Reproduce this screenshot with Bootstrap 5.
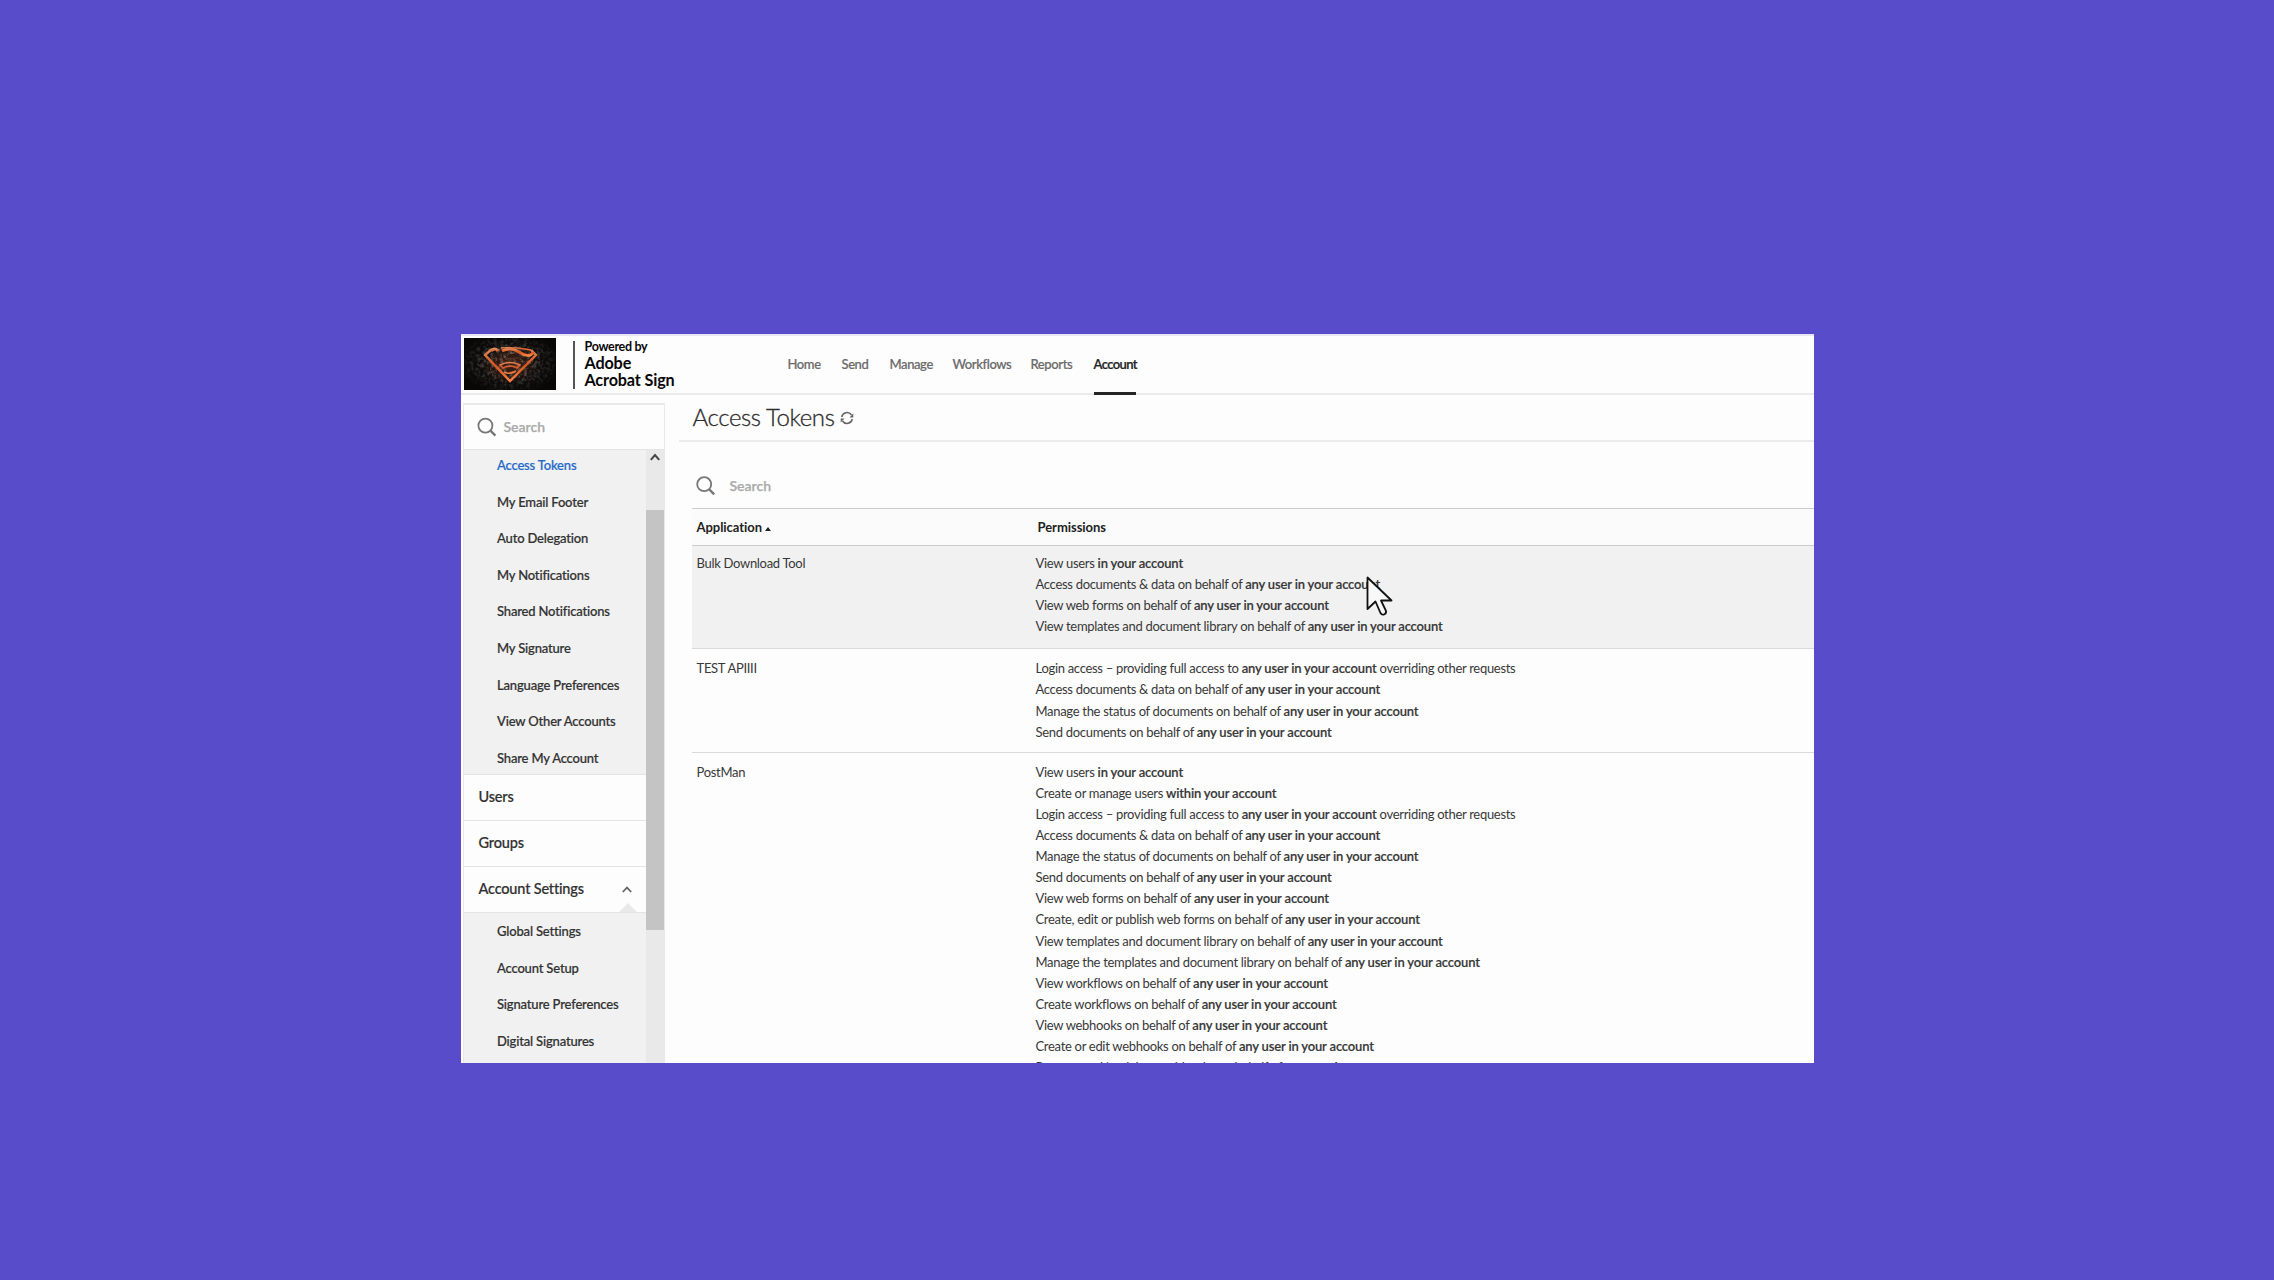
<!DOCTYPE html>
<html lang="en">
<head>
<meta charset="utf-8">
<title>Access Tokens</title>
<link href="https://cdn.jsdelivr.net/npm/bootstrap@5.3.0/dist/css/bootstrap.min.css" rel="stylesheet">
<style>
body{background:#584ccb;font-family:Lato,"Open Sans",sans-serif;font-size:13px;color:#323232;height:1280px;overflow:hidden;padding-top:334px}
.app-window{width:1353px;height:729px;background:#fdfdfd;border-top:2px solid #e9e7f4;position:relative}
.topbar{height:59px;border-bottom:2px solid #ececec;padding-left:3px}
.brand-art{width:92px;height:52px;margin-top:2px;display:block}
.brand-rule{width:2px;height:48px;background:#555;margin:5px 10px 0 17px}
.brand-text{color:#080808;font-weight:700;font-size:16.2px;line-height:17px;letter-spacing:-.15px;padding-top:4px;width:203px}
.brand-text .by-line{font-size:12.5px;line-height:14px;display:block;letter-spacing:-.3px}
.topbar .nav-link{padding:0;color:#6a6a6a;font-weight:500;letter-spacing:-.4px;line-height:18px;padding-top:19px;height:59px;-webkit-text-stroke:.2px}
.topbar .nav-link.active{color:#222;font-weight:600;width:42px;letter-spacing:-.6px;white-space:nowrap;border-bottom:3px solid #252525}
.side{width:202px;margin:8px 0 0 2px;border:solid #e9e9e9;border-width:2px 1px 0 1px;height:660px}
.find{color:#aaa;font-weight:600;font-size:14px;-webkit-text-stroke:.25px}
.side .find{height:45px;border-bottom:1px solid #e4e4e4;padding:0 0 1px 13px;gap:7px}
.scroll-track{width:18px;background:#e9e9e9}
.scroll-track .thumb{height:420px;background:#c4c4c4}
.scroll-track .cap{height:60px;padding-top:3px}
.sub-list{background:#f1f1f1;line-height:20px;font-weight:500;letter-spacing:-.17px;border-bottom:1px solid #e4e4e4;-webkit-text-stroke:.2px}
.sub-list a{display:block;color:#303030;text-decoration:none;height:36.6px;padding-left:33.5px;white-space:nowrap}
.sub-list a.on{color:#1f69c9}
.group-link{height:46px;border-bottom:1px solid #e4e4e4;padding:0 0 1px 15px;font-size:14.5px;font-weight:500;letter-spacing:-.17px;color:#303030;background:#fdfdfd;position:relative;-webkit-text-stroke:.2px}
.notch{position:absolute;right:9px;bottom:0;width:0;height:0;border:solid transparent;border-width:0 9px 9px;border-bottom-color:#e9e9e9}
.content-area{margin-left:14px}
.page-title{height:47px;border-bottom:2px solid #ececec;padding:0 0 0 14px}
.page-title h1{font-size:24px;font-weight:300;letter-spacing:-.4px;color:#2c2c2c;margin:0;line-height:34px;padding-top:5px;-webkit-text-stroke:.3px #2c2c2c}
.listing{margin-left:13px}
.listing .find{height:66px;padding:34px 0 0 4px;gap:14px;align-items:flex-start;line-height:20px}
.token-table{width:100%;border-collapse:collapse;line-height:21.1px;letter-spacing:-.3px;color:#383838;table-layout:fixed}
.token-table th{font-weight:700;letter-spacing:-.05px;border:solid #cbcbcb;border-width:1.5px 0;height:37px;color:#222;background:#fbfbfb;padding:1px 0 0 5px}
.token-table th + th{padding-left:7px}
.token-table td{vertical-align:top;padding:9px 0 9px 5px;border-bottom:1px solid #d9d9d9;white-space:nowrap}
.token-table .hover-row td{background:#f1f1f1;padding-top:7px;padding-bottom:11px}
.token-table b{font-weight:600;letter-spacing:-.17px;-webkit-text-stroke:.15px}
.pointer-mark{position:absolute;left:905px;top:240px}
</style>
</head>
<body>
<div class="app-window mx-auto overflow-hidden">
  <header class="topbar d-flex align-items-start">
    <svg class="brand-art" viewBox="0 0 92 52">
      <defs>
        <filter id="grit" x="0" y="0" width="1" height="1"><feTurbulence type="fractalNoise" baseFrequency=".3" numOctaves="3" seed="4"/><feColorMatrix values="0 0 0 0 .5  0 0 0 0 .46  0 0 0 0 .43  2 0 0 0 -.85"/></filter>
        <filter id="soft"><feGaussianBlur stdDeviation=".45"/></filter>
        <radialGradient id="shade"><stop offset=".25" stop-color="#080706" stop-opacity="0"/><stop offset=".95" stop-color="#080706"/></radialGradient>
        <radialGradient id="glow"><stop offset="0" stop-color="#7a2e12" stop-opacity=".45"/><stop offset="1" stop-color="#8a3515" stop-opacity="0"/></radialGradient>
        <linearGradient id="ember" x1="0" y1="0" x2="0" y2="1"><stop offset="0" stop-color="#e08a58"/><stop offset=".5" stop-color="#d8551f"/><stop offset="1" stop-color="#f58142"/></linearGradient>
      </defs>
      <rect width="92" height="52" fill="#131110"/>
      <rect width="92" height="52" filter="url(#grit)" opacity=".7"/>
      <rect x="-8" y="-8" width="108" height="66" fill="url(#shade)"/>
      <ellipse cx="46" cy="26" rx="28" ry="20" fill="url(#glow)"/>
      <g fill="none" stroke="url(#ember)" filter="url(#soft)">
        <path d="M28 11 21 17 46 43 72 17 67 12" stroke-width="2.4"/>
        <path d="M27 13Q31 9 34 13M38 13C46 9 52 12 57 15S67 19 69 14" stroke-width="3"/>
        <path d="M37 10Q52 9 67 12" stroke-width="1.5"/>
        <path d="M36 27Q46 22 56 27L53 30Q46 26 39 30zM40 34Q46 37 52 33" stroke-width="1.6"/>
      </g>
    </svg>
    <div class="brand-rule"></div>
    <div class="brand-text"><span class="by-line">Powered by</span>Adobe<br>Acrobat Sign</div>
    <nav class="nav flex-nowrap">
      <a class="nav-link" style="width:54px">Home</a>
      <a class="nav-link" style="width:48px">Send</a>
      <a class="nav-link" style="width:63px">Manage</a>
      <a class="nav-link" style="width:78px">Workflows</a>
      <a class="nav-link" style="width:63px">Reports</a>
      <a class="nav-link active">Account</a>
    </nav>
  </header>

  <div class="d-flex">
    <aside class="side flex-shrink-0">
      <div class="find d-flex align-items-center">
        <svg width="20" height="20" viewBox="0 0 20 20" fill="none" stroke="#777" stroke-width="1.8"><circle cx="8.4" cy="8.6" r="7"/><path d="m13.4 13.6 5 5" stroke-width="2.4"/></svg>
        <span>Search</span>
      </div>
      <div class="d-flex">
        <div class="flex-grow-1">
          <div class="sub-list" style="height:325px;padding-top:5px">
            <a class="on">Access Tokens</a><a>My Email Footer</a><a>Auto Delegation</a><a>My Notifications</a><a>Shared Notifications</a><a>My Signature</a><a>Language Preferences</a><a>View Other Accounts</a><a>Share My Account</a>
          </div>
          <div class="group-link d-flex align-items-center">Users</div>
          <div class="group-link d-flex align-items-center">Groups</div>
          <div class="group-link d-flex align-items-center justify-content-between" style="padding-right:14px">Account Settings
            <svg width="10" height="7" viewBox="0 0 10 7" fill="none" stroke="#666" stroke-width="1.8"><path d="m.8 6 4.2-4.4L9.200 6"/></svg>
            <span class="notch"></span>
          </div>
          <div class="sub-list" style="padding-top:8px;height:160px">
            <a>Global Settings</a><a>Account Setup</a><a>Signature Preferences</a><a>Digital Signatures</a>
          </div>
        </div>
        <div class="scroll-track">
          <div class="cap text-center"><svg class="d-block mx-auto" width="10" height="8" viewBox="0 0 10 8" fill="none" stroke="#444" stroke-width="2"><path d="M.8 6.800 5 2l4.200 4.800"/></svg></div>
          <div class="thumb"></div>
        </div>
      </div>
    </aside>

    <main class="content-area flex-grow-1">
      <div class="page-title d-flex align-items-start">
        <h1>Access Tokens</h1>
        <svg width="14" height="14" viewBox="0 0 14 14" style="margin:16px 0 0 6px" fill="none" stroke="#666" stroke-width="1.5"><path d="M1.700 6A5.400 5.400 0 0 1 11.500 4M12.300 8A5.400 5.400 0 0 1 2.500 10"/><path d="M13.300 2.600v3.900H9.500zM.7 11.400V7.500h3.800z" fill="#666" stroke="none"/></svg>
      </div>
      <div class="listing">
        <div class="find d-flex">
          <svg width="20" height="20" viewBox="0 0 20 20" fill="none" stroke="#777" stroke-width="1.8"><circle cx="8.200" cy="8.200" r="7"/><path d="m13.200 13.400 5 5" stroke-width="2.400"/></svg>
          <span>Search</span>
        </div>
        <table class="token-table">
          <colgroup><col style="width:339px"><col></colgroup>
          <thead><tr><th>Application <svg width="6" height="4" viewBox="0 0 6 4"><path d="M0 4 3 0l3 4z" fill="#222"/></svg></th><th>Permissions</th></tr></thead>
          <tbody>
            <tr class="hover-row"><td>Bulk Download Tool</td><td>View users <b>in your account</b><br>Access documents &amp; data on behalf of <b>any user in your account</b><br>View web forms on behalf of <b>any user in your account</b><br>View templates and document library on behalf of <b>any user in your account</b></td></tr>
            <tr><td>TEST APIIII</td><td>Login access – providing full access to <b>any user in your account</b> overriding other requests<br>Access documents &amp; data on behalf of <b>any user in your account</b><br>Manage the status of documents on behalf of <b>any user in your account</b><br>Send documents on behalf of <b>any user in your account</b></td></tr>
            <tr><td>PostMan</td><td>View users <b>in your account</b><br>Create or manage users <b>within your account</b><br>Login access – providing full access to <b>any user in your account</b> overriding other requests<br>Access documents &amp; data on behalf of <b>any user in your account</b><br>Manage the status of documents on behalf of <b>any user in your account</b><br>Send documents on behalf of <b>any user in your account</b><br>View web forms on behalf of <b>any user in your account</b><br>Create, edit or publish web forms on behalf of <b>any user in your account</b><br>View templates and document library on behalf of <b>any user in your account</b><br>Manage the templates and document library on behalf of <b>any user in your account</b><br>View workflows on behalf of <b>any user in your account</b><br>Create workflows on behalf of <b>any user in your account</b><br>View webhooks on behalf of <b>any user in your account</b><br>Create or edit webhooks on behalf of <b>any user in your account</b><br>Remove and/or delete webhooks on behalf of <b>any user in your account</b></td></tr>
          </tbody>
        </table>
      </div>
    </main>
  </div>

  <svg class="pointer-mark" width="28" height="42" viewBox="0 0 28 42"><path d="M1.500 1.500V33l8-7.500 5 11.500q1.500 2.500 4 1.200 2.300-1.200 1.300-3.700L15 24.500h10.500z" fill="#f8f8f8" stroke="#111" stroke-width="1.800" stroke-linejoin="round"/></svg>
</div>
<script src="https://cdn.jsdelivr.net/npm/bootstrap@5.3.0/dist/js/bootstrap.bundle.min.js"></script>
</body>
</html>
